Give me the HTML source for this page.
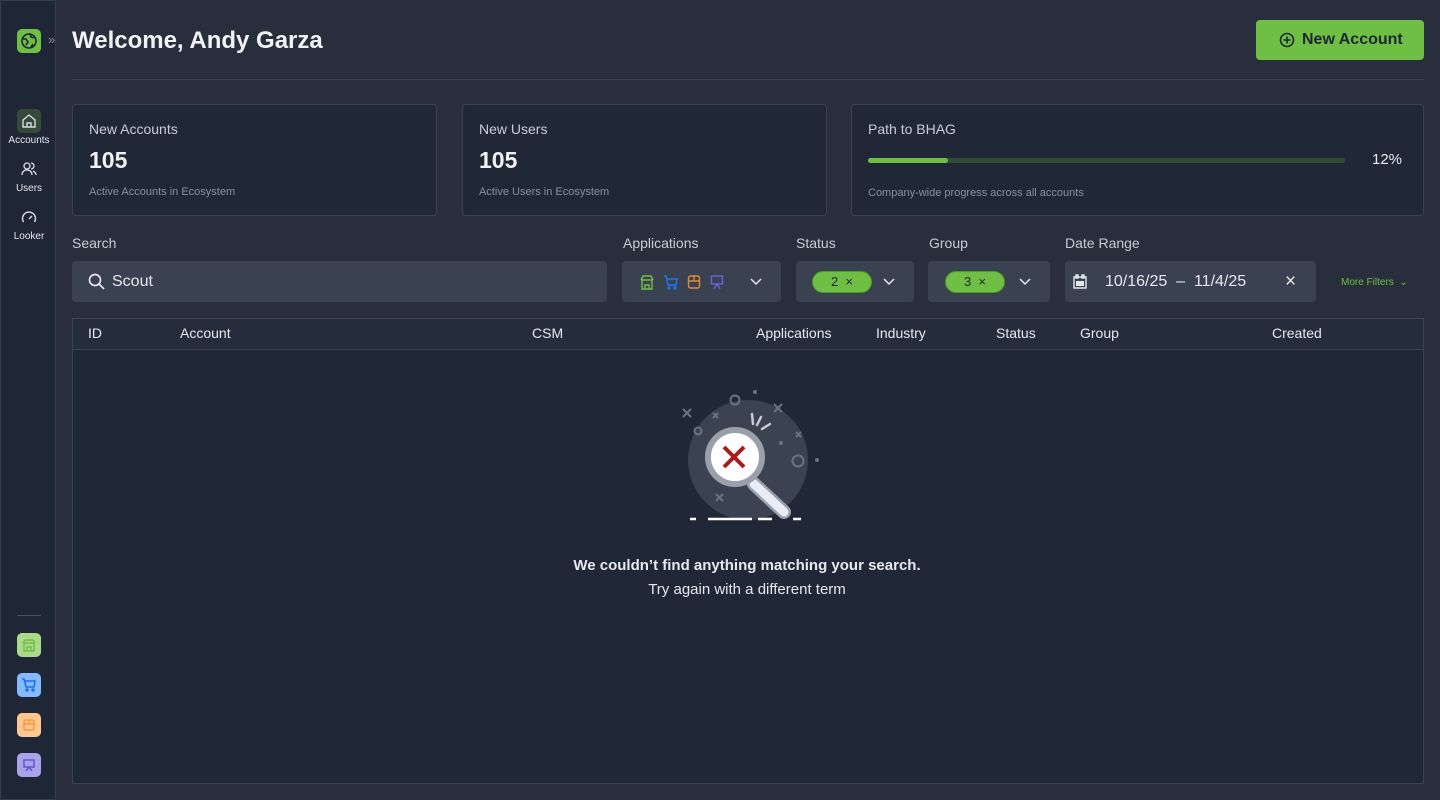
<!DOCTYPE html>
<html><head><meta charset="utf-8"><style>
*{box-sizing:border-box;margin:0;padding:0}
body{width:1440px;height:800px;overflow:hidden;background:#282e3b;font-family:"Liberation Sans",sans-serif;color:#e6e8ec;position:relative}
.side{position:absolute;left:0;top:0;width:56px;height:800px;background:#1f2636;border:1px solid #353c4b}
.ico{position:absolute;left:16px;width:24px;height:24px;border-radius:5px;display:flex;align-items:center;justify-content:center}
.nav{position:absolute;left:0;width:56px;text-align:center;font-size:10px;color:#e6e8ec}
.abs{position:absolute}
.card{position:absolute;top:104px;height:112px;background:#202838;border:1px solid #3a4150;border-radius:4px;padding:16px}
.card .t{font-size:14px;color:#c9ccd3}
.card .n{font-size:23px;font-weight:bold;margin-top:10px;color:#f1f2f4}
.card .s{font-size:11px;color:#8a909b;margin-top:12px}
.lbl{position:absolute;top:235px;font-size:14px;color:#c9ccd3}
.box{position:absolute;top:261px;height:41px;background:#3a4150;border-radius:4px}
.pill{position:absolute;top:10px;width:60px;height:22px;background:#6fbf44;border:1px solid #4f9a2a;border-radius:11px;color:#1f2636;font-size:13px;text-align:center;line-height:20px}
.th{position:absolute;top:325px;font-size:14px;color:#e6e8ec}
</style></head><body>
<div class="side">
 <div class="ico" style="top:28px;background:#6fbf44"><svg width="18" height="18" viewBox="0 0 18 18" fill="none" stroke="#1f2636" stroke-width="1.6"><circle cx="9" cy="9" r="7"/><path d="M3 7l3 0 2 3-2 3M10 2l1 3 3 1M13 12l-2 3"/></svg></div>
 <div class="abs" style="left:47px;top:31px;color:#8a909b;font-size:13px">»</div>
 <div class="ico" style="top:108px;background:#354a3a"><svg width="16" height="16" viewBox="0 0 16 16" fill="none" stroke="#d8dbe0" stroke-width="1.4"><path d="M2 7l6-5 6 5v7H2z M6 14v-4h4v4"/></svg></div>
 <div class="nav" style="top:134px">Accounts</div>
 <svg class="abs" style="left:20px;top:160px" width="16" height="16" viewBox="0 0 16 16" fill="none" stroke="#d8dbe0" stroke-width="1.3"><circle cx="6" cy="5" r="3"/><path d="M1 14c0-3 2-5 5-5s5 2 5 5M10 2a3 3 0 010 6M12 10c2 1 3 2 3 4"/></svg>
 <div class="nav" style="top:182px">Users</div>
 <svg class="abs" style="left:20px;top:208px" width="16" height="16" viewBox="0 0 16 16" fill="none" stroke="#d8dbe0" stroke-width="1.4"><path d="M2.5 13a6.5 6.5 0 1111 0"/><path d="M8 10l3-3"/></svg>
 <div class="nav" style="top:230px">Looker</div>
 <div class="abs" style="left:16px;top:614px;width:24px;height:1px;background:#4a5161"></div>
 <div class="ico" style="top:632px;background:#a9d98a"><svg width="14" height="14" viewBox="0 0 14 14" fill="none" stroke="#6fbf44" stroke-width="1.4"><path d="M2 5h10v8H2zM1 5l2-3h8l2 3M5 13V9h4v4"/></svg></div>
 <div class="ico" style="top:672px;background:#86baff"><svg width="16" height="16" viewBox="0 0 16 16" fill="none" stroke="#1a6ef0" stroke-width="1.5"><path d="M1 2h2l2 8h8l1-6H4"/><circle cx="6" cy="13" r="1"/><circle cx="12" cy="13" r="1"/></svg></div>
 <div class="ico" style="top:712px;background:#ffc78f"><svg width="14" height="14" viewBox="0 0 14 14" fill="none" stroke="#f39a3f" stroke-width="1.5"><rect x="2" y="2" width="10" height="10" rx="2"/><path d="M2 6h10M7 2v4"/></svg></div>
 <div class="ico" style="top:752px;background:#a9a4ea"><svg width="14" height="14" viewBox="0 0 14 14" fill="none" stroke="#5f56d6" stroke-width="1.5"><rect x="2" y="2" width="10" height="7"/><path d="M4 13l3-4 3 4"/></svg></div>
</div>
<div class="abs" style="left:72px;top:27px;font-size:24px;font-weight:bold;color:#f1f2f4">Welcome, Andy Garza</div>
<div class="abs" style="left:1256px;top:20px;width:168px;height:40px;background:#6fbf44;border-radius:4px;color:#1f2636;font-size:16px;font-weight:bold;line-height:40px;padding-left:46px">New Account
 <svg class="abs" style="left:23px;top:12px" width="16" height="16" viewBox="0 0 16 16" fill="none" stroke="#1f2636" stroke-width="1.6"><circle cx="8" cy="8" r="6.5"/><path d="M8 4.5v7M4.5 8h7"/></svg></div>
<div class="abs" style="left:72px;top:79px;width:1352px;height:1px;background:#3a4150"></div>
<div class="card" style="left:72px;width:365px"><div class="t">New Accounts</div><div class="n">105</div><div class="s">Active Accounts in Ecosystem</div></div>
<div class="card" style="left:462px;width:365px"><div class="t">New Users</div><div class="n">105</div><div class="s">Active Users in Ecosystem</div></div>
<div class="card" style="left:851px;width:573px"><div class="t">Path to BHAG</div>
 <div class="abs" style="left:16px;top:53px;width:477px;height:5px;background:#304a33;border-radius:3px"><div style="width:80px;height:5px;background:#6fbf44;border-radius:3px"></div></div>
 <div class="abs" style="left:520px;top:46px;font-size:15px">12%</div>
 <div class="s abs" style="left:16px;top:70px">Company-wide progress across all accounts</div></div>
<div class="lbl" style="left:72px">Search</div><div class="lbl" style="left:623px">Applications</div><div class="lbl" style="left:796px">Status</div><div class="lbl" style="left:929px">Group</div><div class="lbl" style="left:1065px">Date Range</div>
<div class="box" style="left:72px;width:535px"><svg class="abs" style="left:16px;top:12px" width="17" height="17" viewBox="0 0 17 17" fill="none" stroke="#e6e8ec" stroke-width="1.7"><circle cx="7" cy="7" r="5.5"/><path d="M11 11l5 5"/></svg><span class="abs" style="left:40px;top:12px;font-size:16px">Scout</span></div>
<div class="box" style="left:622px;width:159px">
 <svg class="abs" style="left:18px;top:13px" width="14" height="16" viewBox="0 0 14 16" fill="none" stroke="#6fbf44" stroke-width="1.4"><path d="M2 6h10v9H2zM1 6l2-4h8l2 4M5 15v-4h4v4"/></svg>
 <svg class="abs" style="left:41px;top:13px" width="15" height="16" viewBox="0 0 15 16" fill="none" stroke="#1a7af0" stroke-width="1.4"><path d="M1 2h2l2 9h8l1-6H4"/><circle cx="6" cy="14" r="1"/><circle cx="12" cy="14" r="1"/></svg>
 <svg class="abs" style="left:65px;top:13px" width="14" height="16" viewBox="0 0 14 16" fill="none" stroke="#e08a3a" stroke-width="1.4"><rect x="1.5" y="2" width="11" height="12" rx="2"/><path d="M1.5 7h11M7 2v5"/></svg>
 <svg class="abs" style="left:88px;top:13px" width="14" height="16" viewBox="0 0 14 16" fill="none" stroke="#6a62dc" stroke-width="1.4"><rect x="1.5" y="2" width="11" height="8"/><path d="M4 15l3-5 3 5"/></svg>
 <svg class="abs" style="left:128px;top:17px" width="12" height="8" viewBox="0 0 12 8" fill="none" stroke="#e6e8ec" stroke-width="1.5"><path d="M1 1l5 5 5-5"/></svg></div>
<div class="box" style="left:796px;width:118px"><div class="pill" style="left:16px">2 &nbsp;×</div><svg class="abs" style="left:87px;top:17px" width="12" height="8" viewBox="0 0 12 8" fill="none" stroke="#e6e8ec" stroke-width="1.5"><path d="M1 1l5 5 5-5"/></svg></div>
<div class="box" style="left:928px;width:122px"><div class="pill" style="left:17px">3 &nbsp;×</div><svg class="abs" style="left:91px;top:17px" width="12" height="8" viewBox="0 0 12 8" fill="none" stroke="#e6e8ec" stroke-width="1.5"><path d="M1 1l5 5 5-5"/></svg></div>
<div class="box" style="left:1065px;width:251px"><svg class="abs" style="left:8px;top:13px" width="14" height="15" viewBox="0 0 14 15" fill="#e6e8ec"><path d="M1 3h12v11H1z M3 1h2v3H3zM9 1h2v3H9z" fill="none" stroke="#e6e8ec" stroke-width="1.4"/><rect x="3" y="7" width="8" height="5"/></svg><span class="abs" style="left:40px;top:12px;font-size:16px">10/16/25 &nbsp;–&nbsp; 11/4/25</span><span class="abs" style="left:220px;top:10px;font-size:19px">×</span></div>
<div class="abs" style="left:1341px;top:277px;font-size:10px;color:#6fbf44">More Filters &nbsp;⌄</div>
<div class="abs" style="left:72px;top:318px;width:1352px;height:466px;background:#202838;border:1px solid #3a4150">
 <div style="height:31px;background:#252d3c;border-bottom:1px solid #3a4150"></div></div>
<div class="th" style="left:88px">ID</div><div class="th" style="left:180px">Account</div><div class="th" style="left:532px">CSM</div><div class="th" style="left:756px">Applications</div><div class="th" style="left:876px">Industry</div><div class="th" style="left:996px">Status</div><div class="th" style="left:1080px">Group</div><div class="th" style="left:1272px">Created</div>
<svg class="abs" style="left:670px;top:380px" width="160" height="150" viewBox="0 0 160 150">
 <circle cx="78" cy="80" r="60" fill="#3b4352"/>
 <g stroke="#6c7380" stroke-width="2" fill="none"><circle cx="65" cy="20" r="4.5"/><circle cx="28" cy="51" r="3.5"/><circle cx="128" cy="81" r="5.5"/><path d="M13 29l8 8M21 29l-8 8M104 24l8 8M112 24l-8 8M43 33l5 5M48 33l-5 5M126 52l5 5M131 52l-5 5M46 114l7 7M53 114l-7 7"/></g>
 <circle cx="85" cy="12" r="2" fill="#6c7380"/><circle cx="147" cy="80" r="2" fill="#6c7380"/><circle cx="111" cy="63" r="2" fill="#6c7380"/>
 <g stroke="#c5c9d0" stroke-width="2.5" stroke-linecap="round"><path d="M82 34l1 10M91 37l-4 8M100 44l-8 5"/></g>
 <path d="M84 104l30 28" stroke="#9aa0aa" stroke-width="14" stroke-linecap="round"/>
 <path d="M84 104l30 28" stroke="#e8ecf4" stroke-width="9" stroke-linecap="round"/>
 <circle cx="65" cy="77" r="27" fill="#fff" stroke="#9aa0aa" stroke-width="6"/>
 <path d="M54 67l20 20M74 67l-20 20" stroke="#a81c1c" stroke-width="4"/>
 <g stroke="#fff" stroke-width="2.5"><path d="M20 139h6M38 139h44M88 139h14M123 139h8"/></g>
</svg>
<div class="abs" style="left:0;width:1494px;top:557px;text-align:center;font-size:15px;font-weight:bold">We couldn’t find anything matching your search.</div>
<div class="abs" style="left:0;width:1494px;top:581px;text-align:center;font-size:15px">Try again with a different term</div>
</body></html>
